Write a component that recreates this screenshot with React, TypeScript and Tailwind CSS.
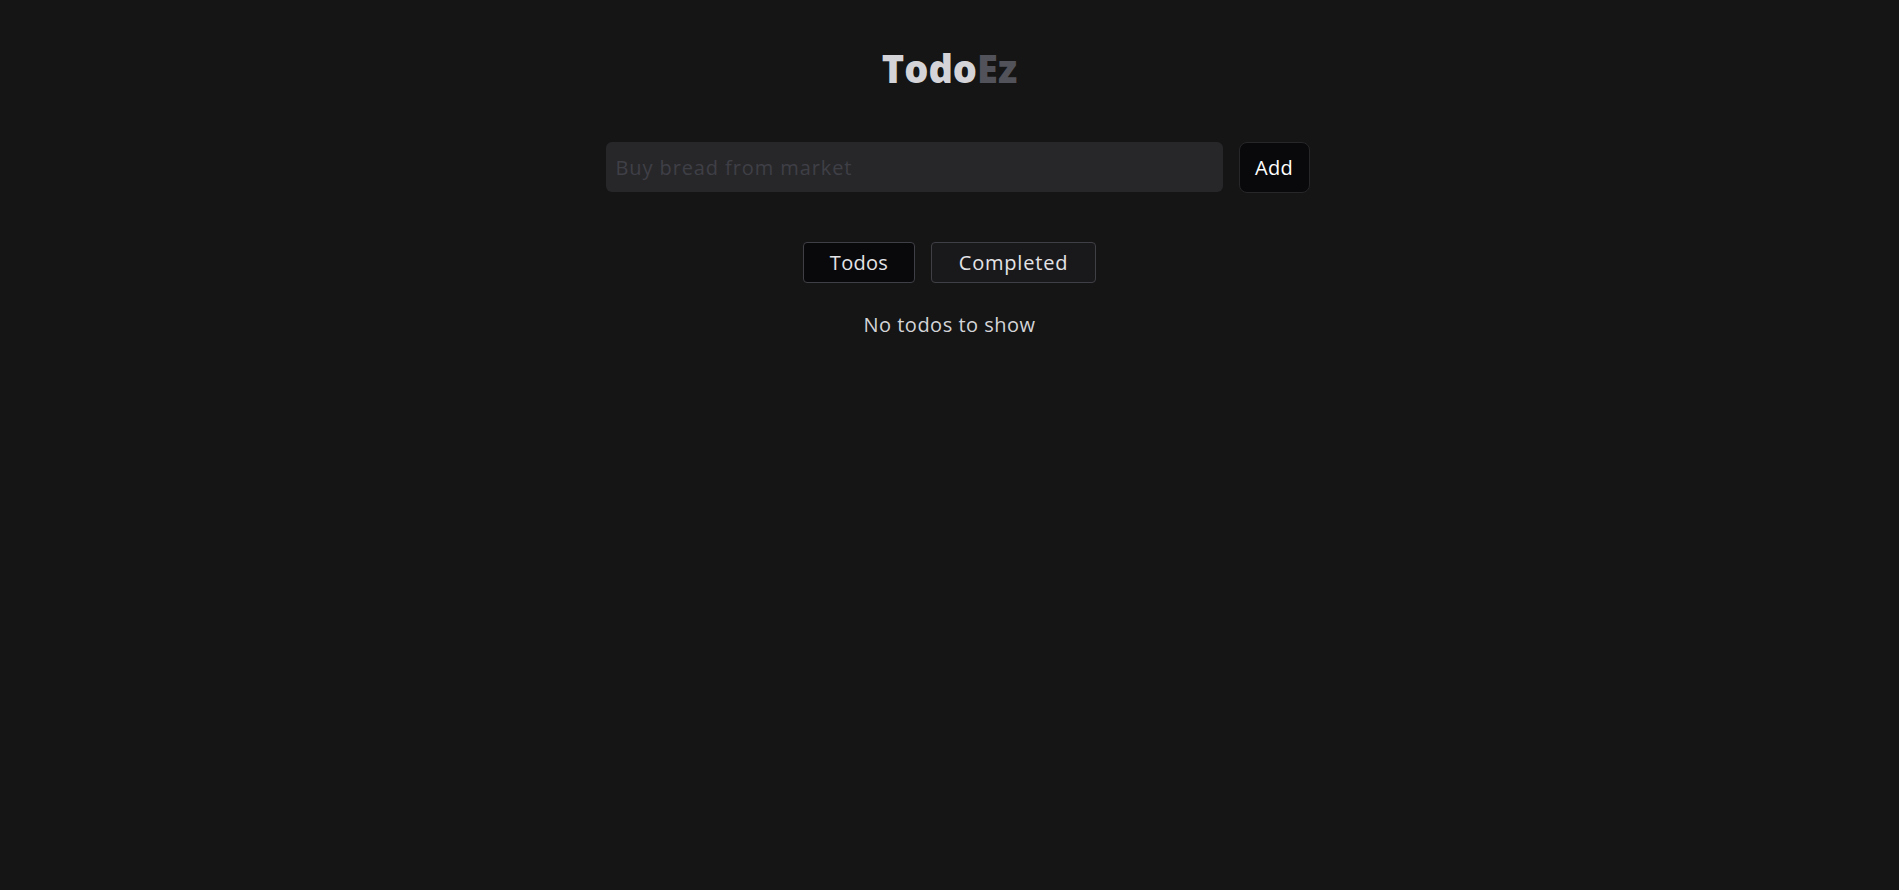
export default function App() {
  return (
    <div
      className="min-h-screen w-full bg-[#151515] flex flex-col items-center"
      style={{ fontFamily: '"Open Sans", "Noto Sans", sans-serif' }}
    >
      <h1 className="mt-[40px] text-[38px] leading-[56px] font-extrabold tracking-[0px]">
        <span className="text-[#d4d4d8]">Todo</span>
        <span className="text-[#52525b]">Ez</span>
      </h1>
      <div className="mt-[46px] w-[720px] flex justify-end gap-4">
        <input
          className="w-[617px] h-[50px] rounded-md bg-[#27272a] px-[10px] text-[20px] tracking-[0.9px] text-zinc-200 placeholder:text-[#3f3f46] outline-none"
          placeholder="Buy bread from market"
        />
        <button className="w-[71px] h-[51px] rounded-lg bg-[#09090b] border border-[#27272a] text-[20px] tracking-[0.3px] text-white">
          Add
        </button>
      </div>
      <div className="mt-[49px] flex gap-4">
        <button className="w-[112px] h-[41px] rounded bg-[#09090b] border border-[#3f3f46] text-[20px] tracking-[0.3px] text-[#e4e4e7]">
          Todos
        </button>
        <button className="w-[165px] h-[41px] rounded bg-[#19191b] border border-[#3f3f46] text-[20px] tracking-[0.8px] text-[#e4e4e7]">
          Completed
        </button>
      </div>
      <p className="mt-[28px] text-[20px] leading-[28px] tracking-[0.5px] text-[#d4d4d8]">No todos to show</p>
    </div>
  );
}
